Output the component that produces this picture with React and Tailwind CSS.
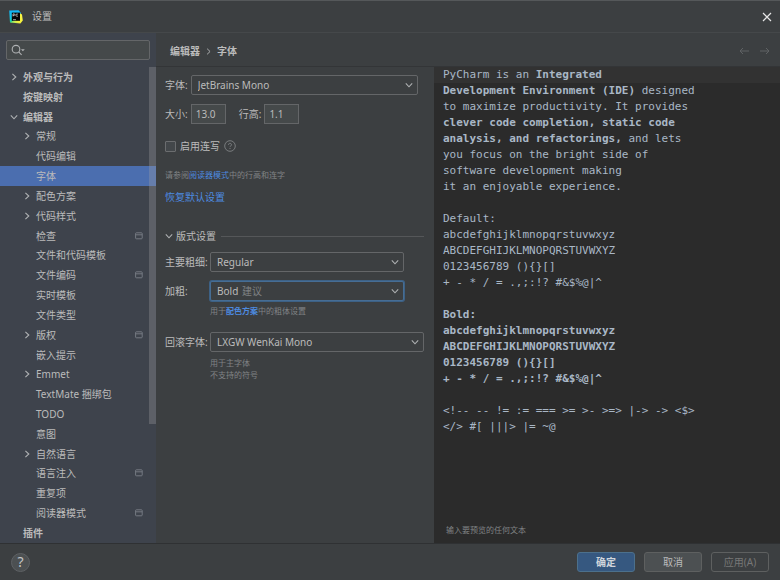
import React from "react";

const TREE = [
  { label: "外观与行为", level: 0, arrow: "right", bold: true },
  { label: "按键映射", level: 0, bold: true },
  { label: "编辑器", level: 0, arrow: "down", bold: true },
  { label: "常规", level: 1, arrow: "right" },
  { label: "代码编辑", level: 1 },
  { label: "字体", level: 1, selected: true },
  { label: "配色方案", level: 1, arrow: "right" },
  { label: "代码样式", level: 1, arrow: "right" },
  { label: "检查", level: 1, project: true },
  { label: "文件和代码模板", level: 1 },
  { label: "文件编码", level: 1, project: true },
  { label: "实时模板", level: 1 },
  { label: "文件类型", level: 1 },
  { label: "版权", level: 1, arrow: "right", project: true },
  { label: "嵌入提示", level: 1 },
  { label: "Emmet", level: 1, arrow: "right" },
  { label: "TextMate 捆绑包", level: 1 },
  { label: "TODO", level: 1 },
  { label: "意图", level: 1 },
  { label: "自然语言", level: 1, arrow: "right" },
  { label: "语言注入", level: 1, project: true },
  { label: "重复项", level: 1 },
  { label: "阅读器模式", level: 1, project: true },
  { label: "插件", level: 0, bold: true },
];

const PREVIEW = [
  [["PyCharm is an "], ["Integrated", true]],
  [["Development Environment (IDE)", true], [" designed"]],
  [["to maximize productivity. It provides"]],
  [["clever code completion, static code", true]],
  [["analysis, and refactorings,", true], [" and lets"]],
  [["you focus on the bright side of"]],
  [["software development making"]],
  [["it an enjoyable experience."]],
  [],
  [["Default:"]],
  [["abcdefghijklmnopqrstuvwxyz"]],
  [["ABCDEFGHIJKLMNOPQRSTUVWXYZ"]],
  [["0123456789 (){}[]"]],
  [["+ - * / = .,;:!? #&$%@|^"]],
  [],
  [["Bold:", true]],
  [["abcdefghijklmnopqrstuvwxyz", true]],
  [["ABCDEFGHIJKLMNOPQRSTUVWXYZ", true]],
  [["0123456789 (){}[]", true]],
  [["+ - * / = .,;:!? #&$%@|^", true]],
  [],
  [["<!-- -- != := === >= >- >=> |-> -> <$>"]],
  [["</> #[ |||> |= ~@"]],
];

function Chevron({ dir = "down", className = "" }) {
  return (
    <svg viewBox="0 0 8 8" className={`size-2 shrink-0 fill-none stroke-[#afb1b3] ${className}`} strokeWidth="1.1" aria-hidden="true">
      <path d={dir === "right" ? "M2.4 0.8 5.8 4 2.4 7.2" : "M0.8 2.4 4 5.8 7.2 2.4"} />
    </svg>
  );
}

function Logo() {
  return (
    <svg viewBox="0 0 14 14" className="size-[14px]" aria-hidden="true">
      <defs>
        <linearGradient id="logo-left" x1="0" y1="0" x2="0" y2="1">
          <stop offset="0" stopColor="#12b5f8" />
          <stop offset="0.6" stopColor="#14c8e8" />
          <stop offset="1" stopColor="#21d789" />
        </linearGradient>
        <linearGradient id="logo-right" x1="0" y1="1" x2="1" y2="0">
          <stop offset="0" stopColor="#5fe27a" />
          <stop offset="0.4" stopColor="#f4f03a" />
          <stop offset="1" stopColor="#fcf84a" />
        </linearGradient>
      </defs>
      <path d="M0.2 0.4 9.6 0.2 12 3 8 11.5 1 12.6Z" fill="url(#logo-left)" />
      <path d="M10.4 3 13 4.4 13.8 10.4 11.4 13.6 1 12.6 6 10Z" fill="url(#logo-right)" />
      <rect x="2.8" y="2.6" width="8.2" height="8.2" fill="#050505" />
      <path d="M4 6.4V3.9h1.1a.7.7 0 0 1 0 1.5H4M8.9 4.3a1.2 1.2 0 1 0 0 1.7M4 9.7h3" fill="none" stroke="#e8e8e8" strokeWidth="0.7" />
    </svg>
  );
}

function ProjectIcon() {
  return (
    <svg viewBox="0 0 8 8" className="size-2 shrink-0 fill-none stroke-[#7b8088]" strokeWidth="0.9" aria-hidden="true">
      <rect x="0.6" y="0.8" width="6.6" height="6" rx="0.8" />
      <path d="M0.6 2.8h6.6" />
    </svg>
  );
}

function Select({ id, options, hint, className = "", focused }) {
  return (
    <div className={`relative ${className}`}>
      <select
        id={id}
        className={
          "block h-5 w-full appearance-none rounded-[2px] border bg-[#3c3f41] pl-[6px] text-[10px] leading-4 text-[#bbbbbb] outline-none " +
          (focused ? "border-[#466d94] ring-1 ring-[#3d6185]" : "border-[#646668]")
        }
      >
        {options.map((o) => (
          <option key={o}>{o}</option>
        ))}
      </select>
      {hint && (
        <span className="pointer-events-none absolute inset-y-0 left-8 flex items-center text-[10px] text-[#7f8284]">{hint}</span>
      )}
      <Chevron className="pointer-events-none absolute top-[6px] right-[5px]" />
    </div>
  );
}

function NumberField({ id, label, value }) {
  return (
    <>
      <label htmlFor={id}>{label}</label>
      <input
        id={id}
        defaultValue={value}
        className="h-5 w-[35px] border border-[#646668] bg-[#45494a] px-1 text-[10px] text-[#bbbbbb] outline-none"
      />
    </>
  );
}

function Sidebar() {
  return (
    <aside className="flex w-[156px] shrink-0 flex-col bg-[#3e434c]">
      <div className="px-[6px] pt-[7px] pb-[7px]">
        <label className="flex h-5 items-center rounded-[2px] border border-[#646668] bg-[#45494a] px-1">
          <svg viewBox="0 0 14 12" className="h-3 w-[14px] shrink-0 fill-none stroke-[#afb1b3]" strokeWidth="1.1" aria-hidden="true">
            <circle cx="5" cy="5.2" r="3.8" />
            <path d="M7.7 7.9 10.6 10.8" />
            <path d="M10 5.2h3.8L11.9 7.2Z" fill="#afb1b3" stroke="none" />
          </svg>
          <input aria-label="搜索" className="min-w-0 flex-1 bg-transparent text-[#bbbbbb] outline-none" />
        </label>
      </div>
      <nav className="relative flex min-h-0 flex-1 flex-col" aria-label="设置">
        {TREE.map((n) => (
          <button
            key={n.label}
            type="button"
            className={
              "flex min-h-0 flex-1 items-center gap-[5px] pr-[13px] text-left leading-4 " +
              (n.level ? "pl-[23px] " : "pl-[10px] ") +
              (n.bold ? "font-bold " : "") +
              (n.selected ? "bg-[#4b6eaf]" : "")
            }
          >
            {n.arrow ? <Chevron dir={n.arrow} /> : <span className="w-2" />}
            <span className="flex-1">{n.label}</span>
            {n.project && <ProjectIcon />}
          </button>
        ))}
        <div className="absolute top-0 right-0 h-3/4 w-[7px] bg-[#a6a6a6]/30" />
      </nav>
    </aside>
  );
}

function FontForm() {
  return (
    <form className="flex w-[278px] shrink-0 flex-col pt-2 pr-[10px] pl-[9px]">
      <div className="flex items-center gap-[3px] pr-[6px]">
        <label htmlFor="font">字体:</label>
        <Select id="font" options={["JetBrains Mono"]} className="flex-1" />
      </div>
      <div className="mt-[9px] flex items-center gap-[13px]">
        <div className="flex items-center gap-[3px]">
          <NumberField id="size" label="大小:" value="13.0" />
        </div>
        <div className="flex items-center gap-[3px]">
          <NumberField id="line-height" label="行高:" value="1.1" />
        </div>
      </div>
      <div className="mt-3 flex h-5 items-center gap-1">
        <input
          id="ligatures"
          type="checkbox"
          className="size-[11px] appearance-none rounded-[1px] border border-[#6b6d6f] bg-[#43474a] checked:bg-[#4b6eaf]"
        />
        <label htmlFor="ligatures">启用连写</label>
        <button type="button" aria-label="帮助">
          <svg viewBox="0 0 12 12" className="size-3 fill-none stroke-[#7f8284]" strokeWidth="0.9" aria-hidden="true">
            <circle cx="6" cy="6" r="5.3" />
            <path d="M4.5 4.8a1.5 1.4 0 1 1 2.3 1.1Q6 6.4 6 7.1M6 8v1" />
          </svg>
        </button>
      </div>
      <p className="mt-[13px] text-[8px] leading-3 text-[#808385]">
        请参阅<a href="#reader" className="text-[#4d8be0]">阅读器模式</a>中的行高和连字
      </p>
      <a href="#restore" className="mt-2 self-start leading-4 text-[#4d8be0]">恢复默认设置</a>

      <button type="button" className="mt-[23px] flex items-center gap-[3px] leading-4">
        <Chevron />
        <span>版式设置</span>
        <span className="ml-[2px] h-px flex-1 bg-[#555759]" />
      </button>

      <div className="mt-2 grid grid-cols-[45px_1fr] items-center">
        <label htmlFor="main-weight">主要粗细:</label>
        <Select id="main-weight" options={["Regular"]} className="mr-5" />
        <label htmlFor="bold-weight" className="mt-[9px]">加粗:</label>
        <Select id="bold-weight" options={["Bold"]} hint="建议" focused className="mt-[9px] mr-5" />
        <p className="col-start-2 mt-1 text-[8px] leading-3 text-[#808385]">
          用于<a href="#scheme" className="font-bold text-[#4d8be0]">配色方案</a>中的粗体设置
        </p>
        <label htmlFor="fallback" className="mt-[15px]">回滚字体:</label>
        <Select id="fallback" options={["LXGW WenKai Mono"]} className="mt-[15px]" />
        <p className="col-start-2 mt-[5px] text-[8px] leading-3 text-[#808385]">
          用于主字体
          <br />
          不支持的符号
        </p>
      </div>
    </form>
  );
}

function Preview() {
  return (
    <section className="flex min-w-0 flex-1 flex-col bg-[#2b2b2b]">
      <div
        role="textbox"
        aria-multiline="true"
        aria-label="预览"
        contentEditable
        suppressContentEditableWarning
        className="flex-1 font-['DejaVu_Sans_Mono',monospace] text-[11px] leading-4 whitespace-pre text-[#a9b7c6] outline-none"
      >
        {PREVIEW.map((line, i) => (
          <div key={i} className={"h-4 pl-[9px] " + (i === 0 ? "bg-[#323232]" : "")}>
            {line.map(([text, bold], j) => (
              <span key={j} className={bold ? "font-bold" : ""}>{text}</span>
            ))}
          </div>
        ))}
      </div>
      <p className="px-3 pb-[7px] text-[8px] leading-3 text-[#808385]">输入要预览的任何文本</p>
    </section>
  );
}

export default function App() {
  return (
    <main className="flex h-screen flex-col overflow-hidden bg-[#3c3f41] font-['Noto_Sans','Noto_Sans_CJK_SC',sans-serif] text-[10px] text-[#bbbbbb]">
      <header className="flex h-[33px] shrink-0 items-center border-t border-b border-t-[#55585a] border-b-[#45484a] pr-2 pl-[9px]">
        <Logo />
        <h1 className="ml-[9px] flex-1">设置</h1>
        <button type="button" aria-label="关闭">
          <svg viewBox="0 0 10 10" className="size-[10px] stroke-[#e6e6e6]" strokeWidth="1.2" aria-hidden="true">
            <path d="M1 1 9 9M9 1 1 9" />
          </svg>
        </button>
      </header>

      <div className="flex min-h-0 flex-1">
        <Sidebar />
        <div className="flex min-w-0 flex-1 flex-col">
          <div className="flex h-[34px] shrink-0 items-center border-b border-[#333537] pt-[3px] pr-[10px] pl-[14px] font-bold">
            <span>编辑器</span>
            <Chevron dir="right" className="mx-[5px] !size-[7px]" />
            <span className="flex-1">字体</span>
            <button type="button" aria-label="后退">
              <svg viewBox="0 0 10 8" className="h-2 w-[10px] fill-none stroke-[#5f6264]" aria-hidden="true">
                <path d="M10 4H1M4 1 1 4 4 7" />
              </svg>
            </button>
            <button type="button" aria-label="前进" className="ml-[11px]">
              <svg viewBox="0 0 10 8" className="h-2 w-[10px] fill-none stroke-[#5f6264]" aria-hidden="true">
                <path d="M0 4H9M6 1 9 4 6 7" />
              </svg>
            </button>
          </div>
          <div className="flex min-h-0 flex-1">
            <FontForm />
            <Preview />
          </div>
        </div>
      </div>

      <footer className="flex h-[37px] shrink-0 items-center gap-[9px] border-t border-[#2f3133] pr-[11px] pl-[11px]">
        <button
          type="button"
          aria-label="帮助"
          className="mr-auto flex size-[19px] items-center justify-center rounded-full border border-[#5e6164] bg-[#4c5052] text-[14px] leading-4 text-[#c4c6c8]"
        >
          ?
        </button>
        <button type="button" className="h-5 w-[58px] rounded-[3px] border border-[#4c708c] bg-[#365880] font-bold text-[#d0d6dc]">确定</button>
        <button type="button" className="h-5 w-[58px] rounded-[3px] border border-[#5e6060] bg-[#4c5052]">取消</button>
        <button type="button" className="h-5 w-[58px] rounded-[3px] border border-[#5e6060] text-[#777777]">应用(A)</button>
      </footer>
    </main>
  );
}
